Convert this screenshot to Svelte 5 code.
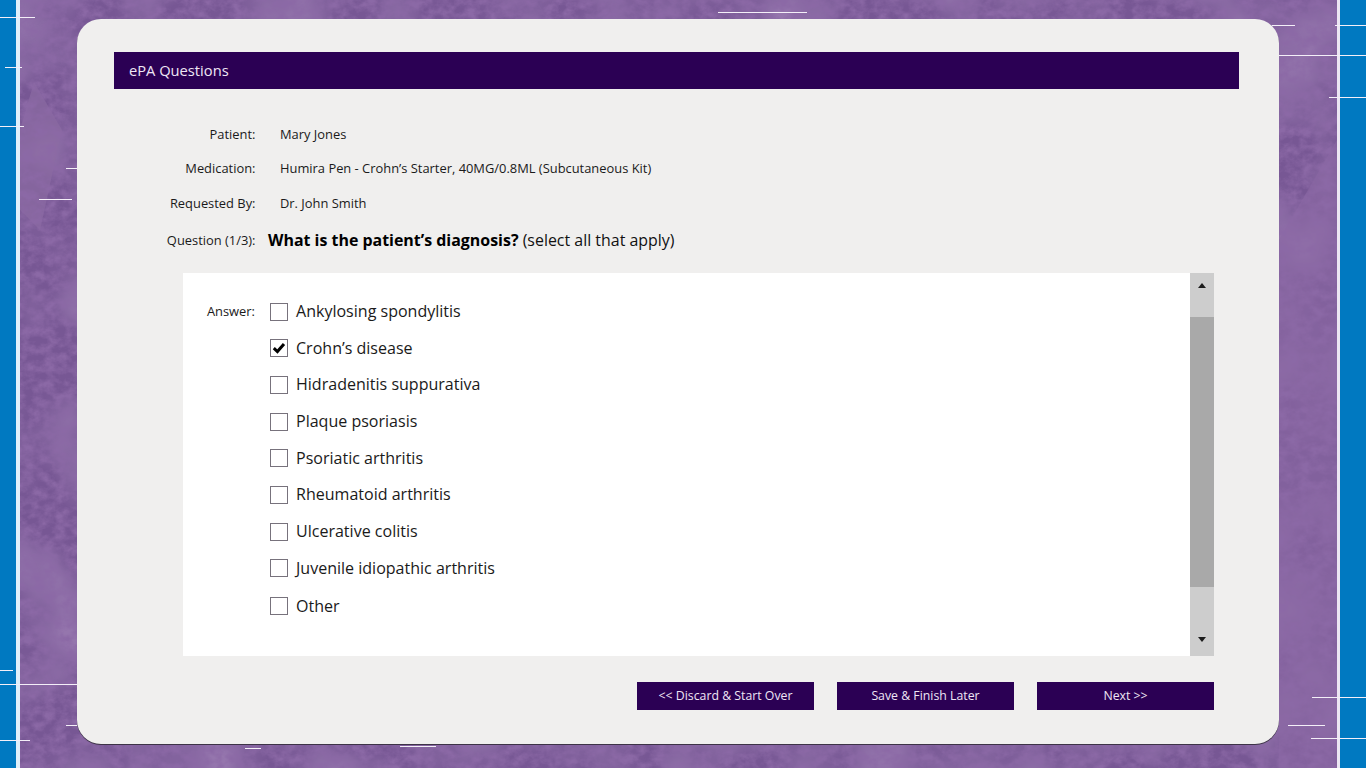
<script>
  const lines = [
    [17, 0, 35], [67, 5, 17], [126, 0, 24], [168, 66, 11], [199, 39, 33],
    [670, 0, 13], [684, 0, 77], [725, 66, 11], [740, 0, 30], [748, 245, 16],
    [746, 400, 36], [12, 718, 89], [25, 1272, 23], [25, 1335, 31], [55, 1279, 87],
    [97, 1329, 37], [697, 1312, 54], [725, 1288, 37], [738, 1311, 55]
  ];
  const details = [
    ['Patient:', 'Mary Jones'],
    ['Medication:', 'Humira Pen - Crohn’s Starter, 40MG/0.8ML (Subcutaneous Kit)'],
    ['Requested By:', 'Dr. John Smith']
  ];
  const answers = [
    ['Ankylosing spondylitis', false],
    ['Crohn’s disease', true],
    ['Hidradenitis suppurativa', false],
    ['Plaque psoriasis', false],
    ['Psoriatic arthritis', false],
    ['Rheumatoid arthritis', false],
    ['Ulcerative colitis', false],
    ['Juvenile idiopathic arthritis', false],
    ['Other', false]
  ];
</script>

<div class="page">
  <svg class="texture" width="1366" height="768" aria-hidden="true">
    <defs>
      <filter id="grain" x="0" y="0" width="100%" height="100%">
        <feTurbulence type="fractalNoise" baseFrequency="0.09 0.11" numOctaves="4" seed="11" />
        <feColorMatrix type="matrix" values="0 0 0 0 0.26  0 0 0 0 0.14  0 0 0 0 0.38  2.2 0 0 0 -0.72" />
      </filter>
      <filter id="patches" x="0" y="0" width="100%" height="100%">
        <feTurbulence type="fractalNoise" baseFrequency="0.012" numOctaves="3" seed="4" />
        <feColorMatrix type="matrix" values="0 0 0 0 0.30  0 0 0 0 0.18  0 0 0 0 0.42  2.4 0 0 0 -0.9" />
      </filter>
    </defs>
    <rect width="1366" height="768" filter="url(#patches)" />
    <polygon points="20,130 34,82 62,130 40,230 20,210" fill="#8b6ba3" opacity="0.7" />
    <polygon points="1279,240 1337,140 1337,768 1279,768" fill="#8a68a4" opacity="0.6" />
    <rect width="1366" height="768" filter="url(#grain)" />
  </svg>

  <div class="strip left"></div>
  <main class="stage">
    <section class="card">
      <header class="title">ePA Questions</header>

      <dl class="details">
        {#each details as [label, value]}
          <div class="detail">
            <dt>{label}</dt>
            <dd>{value}</dd>
          </div>
        {/each}
      </dl>

      <div class="question">
        <span class="q-label">Question (1/3):</span>
        <p><strong>What is the patient’s diagnosis?</strong> (select all that apply)</p>
      </div>

      <div class="panel">
        <div class="answers">
          <span class="a-label">Answer:</span>
          <ul>
            {#each answers as [name, checked]}
              <li>
                <span class="box">
                  {#if checked}
                    <svg width="14" height="12" viewBox="0 0 14 12" aria-hidden="true">
                      <path d="M1.8 6.2 L5.4 9.6 L12 2" fill="none" stroke="#000" stroke-width="3" />
                    </svg>
                  {/if}
                </span>
                <span class="name">{name}</span>
              </li>
            {/each}
          </ul>
        </div>
        <div class="scrollbar">
          <span class="arrow up"></span>
          <span class="thumb"></span>
          <span class="arrow down"></span>
        </div>
      </div>

      <footer class="actions">
        <button>&lt;&lt; Discard &amp; Start Over</button>
        <button>Save &amp; Finish Later</button>
        <button>Next &gt;&gt;</button>
      </footer>
    </section>
  </main>
  <div class="strip right"></div>

  {#each lines as [y, x, w]}
    <i class="glitch" style="top:{y}px;left:{x}px;width:{w}px"></i>
  {/each}
</div>

<style>
  :global(body) {
    margin: 0;
    overflow: hidden;
  }
  .page {
    position: relative;
    display: flex;
    width: 1366px;
    height: 768px;
    overflow: hidden;
    background: #775794;
    font-family: "Open Sans", "Liberation Sans", sans-serif;
    color: #1a1a1a;
  }
  .texture {
    position: absolute;
    inset: 0;
  }
  .strip {
    position: relative;
    flex: none;
    background: #0079c1;
  }
  .strip.left {
    width: 16px;
    border-right: 4px solid #dff0fa;
  }
  .strip.right {
    width: 26px;
    border-left: 3px solid #ece6f3;
  }
  .stage {
    position: relative;
    z-index: 1;
    flex: 1;
    min-width: 0;
    padding: 19px 58px 0 57px;
  }
  .card {
    display: flex;
    flex-direction: column;
    box-sizing: border-box;
    height: 725px;
    padding: 33px 40px 0 37px;
    background: #f0efee;
    border-radius: 24px;
    box-shadow: 0 1px 0 #3d3347;
  }
  .title {
    flex: none;
    box-sizing: border-box;
    height: 37px;
    padding-left: 15px;
    background: #2b0054;
    color: #efe6f5;
    font-size: 14.7px;
    line-height: 36px;
  }
  .details {
    margin: 35px 0 0;
    display: flex;
    flex-direction: column;
    gap: 14.4px;
  }
  .detail {
    display: flex;
    height: 20px;
    align-items: center;
    font-size: 12.9px;
  }
  dt {
    width: 141.5px;
    text-align: right;
  }
  dd {
    margin: 0 0 0 24.5px;
  }
  .question {
    display: flex;
    align-items: center;
    height: 24px;
    margin-top: 15.4px;
  }
  .q-label {
    width: 141.5px;
    font-size: 12.9px;
    text-align: right;
  }
  .question p {
    margin: 0 0 0 12.5px;
    font-size: 15.95px;
    color: #111;
  }
  .question strong {
    font-weight: 700;
    color: #000;
  }
  .panel {
    display: flex;
    height: 383px;
    margin: 21px 25px 0 69px;
    background: #fff;
  }
  .answers {
    flex: 1;
    display: flex;
    align-items: flex-start;
    padding-top: 20px;
  }
  .a-label {
    width: 72px;
    height: 37px;
    font-size: 12.9px;
    line-height: 37px;
    text-align: right;
  }
  ul {
    list-style: none;
    margin: 0 0 0 15px;
    padding: 0;
  }
  li {
    display: flex;
    align-items: center;
    gap: 8px;
    height: 36.7px;
    font-size: 16.05px;
  }
  li:last-child {
    margin-top: 1px;
  }
  .name {
    margin-top: -1px;
  }
  .box {
    display: flex;
    align-items: center;
    justify-content: center;
    box-sizing: border-box;
    width: 18px;
    height: 18px;
    border: 1px solid #77727c;
    background: #fff;
  }
  .scrollbar {
    flex: none;
    display: flex;
    flex-direction: column;
    align-items: center;
    width: 24px;
    background: #cdcdcd;
  }
  .arrow {
    flex: none;
    width: 0;
    height: 0;
    border-left: 4px solid transparent;
    border-right: 4px solid transparent;
  }
  .arrow.up {
    margin: 10px 0 0;
    border-bottom: 5px solid #1c1c1c;
  }
  .arrow.down {
    margin: 50px 0 0;
    border-top: 5px solid #1c1c1c;
  }
  .thumb {
    flex: none;
    width: 100%;
    height: 270px;
    margin-top: 29px;
    background: #a9a9a9;
  }
  .actions {
    display: flex;
    justify-content: flex-end;
    gap: 23px;
    margin: 26px 25px 0 0;
  }
  button {
    width: 177px;
    height: 28px;
    padding: 0 0 1px;
    border: none;
    background: #2b0054;
    color: #efe6f5;
    font: 400 12.3px "Open Sans", "Liberation Sans", sans-serif;
  }
  .glitch {
    position: absolute;
    z-index: 2;
    height: 1px;
    background: #f4eff8;
  }
</style>
